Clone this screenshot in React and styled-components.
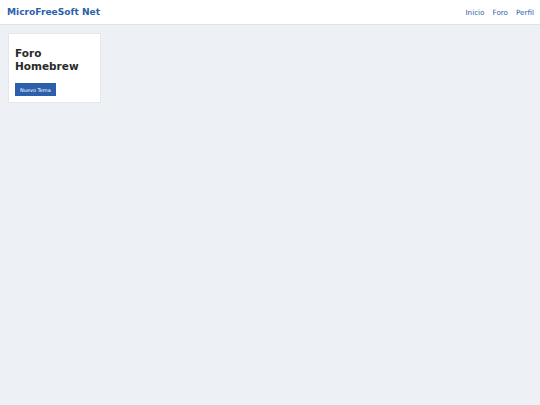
import styled, { createGlobalStyle } from "styled-components";

const GlobalStyle = createGlobalStyle`
  html, body {
    margin: 0;
    padding: 0;
    background: #edf1f5;
    font-family: "DejaVu Sans", Verdana, sans-serif;
  }
`;

const Header = styled.header`
  display: flex;
  justify-content: space-between;
  align-items: center;
  height: 24px;
  padding: 0 6px 0 7px;
  background: #ffffff;
  border-bottom: 1px solid #dfe3e8;
`;

const Brand = styled.a`
  color: #2b5fab;
  font-weight: bold;
  font-size: 9.1px;
  text-decoration: none;
`;

const Nav = styled.nav`
  display: flex;
  gap: 8px;
`;

const NavLink = styled.a`
  color: #2b5fab;
  font-size: 7.2px;
  text-decoration: none;
`;

const Main = styled.main`
  padding: 8px;
`;

const Card = styled.section`
  width: 79px;
  background: #ffffff;
  border: 1px solid #e3e6ea;
  padding: 13px 6px 6px;
`;

const Title = styled.h1`
  margin: 0 0 10px;
  font-size: 10.5px;
  line-height: 13px;
  color: #2a2a2a;
`;

const Button = styled.button`
  display: block;
  background: #2b5fab;
  color: #ffffff;
  border: none;
  font-family: inherit;
  font-size: 5px;
  height: 13px;
  padding: 0 5px;
  cursor: pointer;
`;

export default function App() {
  return (
    <>
      <GlobalStyle />
      <Header>
        <Brand href="#">MicroFreeSoft Net</Brand>
        <Nav>
          <NavLink href="#">Inicio</NavLink>
          <NavLink href="#">Foro</NavLink>
          <NavLink href="#">Perfil</NavLink>
        </Nav>
      </Header>
      <Main>
        <Card>
          <Title>
            Foro
            <br />
            Homebrew
          </Title>
          <Button>Nuevo Tema</Button>
        </Card>
      </Main>
    </>
  );
}
